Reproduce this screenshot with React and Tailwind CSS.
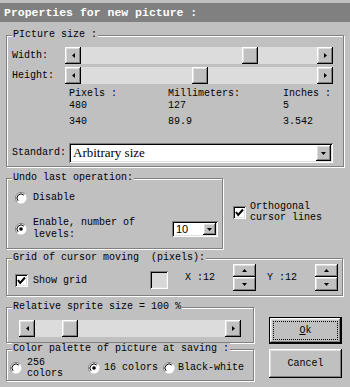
import React from "react";

const raised =
  "bg-[#c0c0c0] shadow-[inset_-1px_-1px_0_#000,inset_1px_1px_0_#fff,inset_-2px_-2px_0_#808080,inset_2px_2px_0_#dfdfdf]";
const sunken =
  "shadow-[inset_1px_1px_0_#808080,inset_-1px_-1px_0_#fff,inset_2px_2px_0_#000,inset_-2px_-2px_0_#dfdfdf]";

function Tri({ dir }) {
  if (dir === "left")
    return (
      <svg width="3" height="5" viewBox="0 0 3 5">
        <polygon points="3,0 3,5 0,2.5" fill="#000" />
      </svg>
    );
  if (dir === "right")
    return (
      <svg width="3" height="5" viewBox="0 0 3 5">
        <polygon points="0,0 0,5 3,2.5" fill="#000" />
      </svg>
    );
  if (dir === "up")
    return (
      <svg width="5" height="3" viewBox="0 0 5 3">
        <polygon points="0,3 5,3 2.5,0" fill="#000" />
      </svg>
    );
  return (
    <svg width="5" height="3" viewBox="0 0 5 3">
      <polygon points="0,0 5,0 2.5,3" fill="#000" />
    </svg>
  );
}

function Group({ label, className, children }) {
  return (
    <div
      className={
        "relative border border-[#808080] shadow-[inset_1px_1px_0_#fff,1px_1px_0_#fff] " +
        className
      }
    >
      <span className="absolute left-[5px] top-[-7px] bg-[#c0c0c0] px-[1px] leading-[12px] whitespace-pre">
        {label}
      </span>
      {children}
    </div>
  );
}

function HScroll({ className, thumbOffset }) {
  return (
    <div className={"flex h-[17px] bg-[#dcdcdc] " + className}>
      <div className={"flex h-[17px] w-[16px] shrink-0 items-center justify-center " + raised}>
        <Tri dir="left" />
      </div>
      <div className="relative flex-1">
        <div className={"h-[17px] w-[16px] " + raised} style={{ marginLeft: thumbOffset }} />
      </div>
      <div className={"flex h-[17px] w-[16px] shrink-0 items-center justify-center " + raised}>
        <Tri dir="right" />
      </div>
    </div>
  );
}

function Radio({ checked }) {
  return (
    <svg width="12" height="12" viewBox="0 0 12 12" className="shrink-0">
      <circle cx="6" cy="6" r="5.5" fill="#fff" />
      <path d="M2.1 9.9 A5.5 5.5 0 0 1 9.9 2.1" fill="none" stroke="#808080" strokeWidth="1" />
      <path d="M3.17 8.83 A4 4 0 0 1 8.83 3.17" fill="none" stroke="#000" strokeWidth="1" />
      {checked && <circle cx="6" cy="6" r="1.8" fill="#000" />}
    </svg>
  );
}

function Check() {
  return (
    <div className={"relative h-[13px] w-[13px] shrink-0 bg-white " + sunken}>
      <svg width="13" height="13" viewBox="0 0 13 13" className="absolute left-0 top-0">
        <path d="M3 6 L5.2 9 L10 3.5" fill="none" stroke="#000" strokeWidth="2" />
      </svg>
    </div>
  );
}

function Spin() {
  return (
    <div className="flex w-[23px] flex-col">
      <div className={"flex h-[13px] items-center justify-center " + raised}>
        <Tri dir="up" />
      </div>
      <div className={"flex h-[14px] items-center justify-center " + raised}>
        <Tri dir="down" />
      </div>
    </div>
  );
}

export default function App() {
  return (
    <div className="h-[387px] w-[350px] overflow-hidden bg-[#c0c0c0] pt-[3px] font-['Liberation_Mono',monospace] text-[10px] leading-[12px] text-black">
      <div className="h-[19px] bg-[#808080] pl-[4px] text-[11.5px] font-bold leading-[19px] text-white whitespace-pre">
        Properties for new picture :
      </div>

      <div className="px-[6px]">
        {/* Picture size */}
        <Group label="PIcture size :" className="mt-[13px] h-[132px] w-[338px]">
          <div className="flex h-[17px] items-center pl-[5px] mt-[11px]">
            <div className="w-[53px]">Width:</div>
            <HScroll className="w-[268px]" thumbOffset={161} />
          </div>
          <div className="mt-[3px] flex h-[17px] items-center pl-[5px]">
            <div className="w-[53px]">Height:</div>
            <HScroll className="w-[268px]" thumbOffset={111} />
          </div>
          <div className="mt-[4px] grid grid-cols-[99px_115px_60px] pl-[62px] whitespace-pre">
            <div>Pixels :</div>
            <div>Millimeters:</div>
            <div>Inches :</div>
            <div>480</div>
            <div>127</div>
            <div>5</div>
            <div className="mt-[4px]">340</div>
            <div className="mt-[4px]">89.9</div>
            <div className="mt-[4px]">3.542</div>
          </div>
          <div className="mt-[15px] flex h-[20px] items-center pl-[5px]">
            <div className="w-[57px]">Standard:</div>
            <div className={"flex h-[20px] w-[264px] items-center bg-white pl-[4px] pr-[2px] " + sunken}>
              <div className="flex-1 font-['Liberation_Serif',serif] text-[13px] leading-[16px]">Arbitrary size</div>
              <div className={"flex h-[16px] w-[15px] items-center justify-center " + raised}>
                <Tri dir="down" />
              </div>
            </div>
          </div>
        </Group>

        {/* Undo + orthogonal */}
        <div className="mt-[11px] flex">
          <Group label="Undo last operation:" className="h-[71px] w-[217px] shrink-0">
            <div className="mt-[13px] flex h-[12px] items-center pl-[8px]">
              <Radio />
              <span className="ml-[6px]">Disable</span>
            </div>
            <div className="mt-[13px] flex items-center pl-[8px]">
              <Radio checked />
              <div className="ml-[6px] w-[139px] whitespace-pre">
                <div>Enable, number of</div>
                <div>levels:</div>
              </div>
              <div className={"flex h-[16px] w-[46px] items-center bg-white pl-[4px] pr-[2px] " + sunken}>
                <span className="flex-1 font-['Liberation_Sans',sans-serif] text-[11px]">10</span>
                <div className={"flex h-[12px] w-[13px] items-center justify-center " + raised}>
                  <Tri dir="down" />
                </div>
              </div>
            </div>
          </Group>
          <div className="ml-[10px] mt-[23px] flex h-[22px] items-center">
            <Check />
            <div className="ml-[4px] leading-[11px]">
              <div>Orthogonal</div>
              <div>cursor lines</div>
            </div>
          </div>
        </div>

        {/* Grid */}
        <Group label="Grid of cursor moving  (pixels):" className="mt-[9px] flex h-[38px] w-[337px] items-start">
          <div className="ml-[8px] mt-[15px] flex h-[13px] w-[135px] items-center">
            <Check />
            <span className="ml-[5px]">Show grid</span>
          </div>
          <div className={"mt-[12px] h-[18px] w-[18px] bg-[#d8d8d8] " + sunken} />
          <div className="ml-[17px] mt-[13px] w-[48px] whitespace-pre">X :12</div>
          <div className="mt-[5px]">
            <Spin />
          </div>
          <div className="ml-[11px] mt-[13px] w-[48px] whitespace-pre">Y :12</div>
          <div className="mt-[5px]">
            <Spin />
          </div>
        </Group>

        {/* Bottom */}
        <div className="mt-[11px] flex">
          <div className="flex w-[248px] flex-col">
            <Group label="Relative sprite size = 100 %" className="h-[36px] w-[248px]">
              <div className="ml-[12px] mt-[12px]">
                <HScroll className="w-[222px]" thumbOffset={27} />
              </div>
            </Group>
            <Group label="Color palette of picture at saving :" className="mt-[6px] h-[32px] w-[248px]">
              <div className="ml-[3px] mt-[7px] flex h-[22px] items-center">
                <Radio />
                <div className="ml-[5px] w-[61px] leading-[11px]">
                  <div>256</div>
                  <div>colors</div>
                </div>
                <Radio checked />
                <span className="ml-[4px] w-[59px]">16 colors</span>
                <Radio />
                <span className="ml-[3px]">Black-white</span>
              </div>
            </Group>
          </div>
          <div className="ml-[15px] mt-[10px] flex flex-col">
            <div className="h-[27px] w-[73px] border border-black">
              <div className={"flex h-[25px] w-[71px] items-center justify-center p-[3px] " + raised}>
                <div className="flex h-full w-full items-center justify-center border border-dotted border-black">
                  <span>
                    <span className="underline">O</span>k
                  </span>
                </div>
              </div>
            </div>
            <div className={"mt-[5px] flex h-[29px] w-[73px] items-center justify-center " + raised}>
              Cancel
            </div>
          </div>
        </div>
      </div>
    </div>
  );
}
